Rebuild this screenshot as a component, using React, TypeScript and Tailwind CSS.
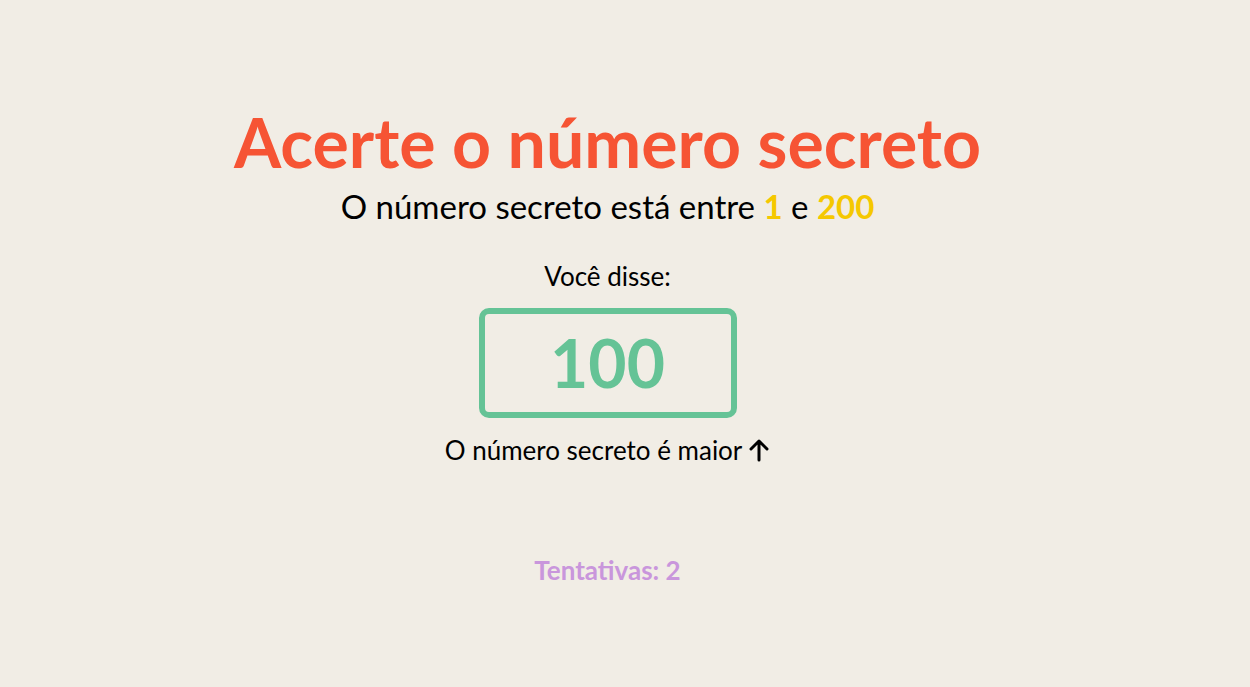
import React from 'react'

export default function App() {
    return (
        <div className="min-h-screen bg-[#f1ede5] pr-[35px] text-black" style={{ fontFamily: 'Lato, "Noto Sans", sans-serif' }}>
            <div className="flex flex-col items-center pt-[102px]">
                <h1 className="text-[68px] leading-[80px] font-bold text-[#f65434]">Acerte o número secreto</h1>
                <h3 className="text-[33px] leading-[40px] mt-[4px]">
                    O número secreto está entre <span className="font-bold text-[#f5c800]">1</span> e <span className="font-bold text-[#f5c800]">200</span>
                </h3>

                <div className="mt-[34px] text-[26px] leading-[32px]">Você disse:</div>
                <div className="mt-[16px] w-[258px] h-[110px] border-[6px] border-[#65c396] rounded-[10px] flex items-center justify-center">
                    <span className="text-[66px] font-bold text-[#65c396] leading-none">100</span>
                </div>
                <div className="mt-[16px] text-[26px] leading-[32px] flex items-center gap-[6px]">
                    O número secreto é maior
                    <svg width="22" height="24" viewBox="0 0 22 24" fill="none" stroke="black" strokeWidth="3" strokeLinecap="round" strokeLinejoin="round">
                        <path d="M11 22V3M3 11l8-8 8 8" />
                    </svg>
                </div>

                <div className="mt-[88px] text-[26px] leading-[32px] font-bold text-[#c996dc]">Tentativas: 2</div>
            </div>
        </div>
    )
}
